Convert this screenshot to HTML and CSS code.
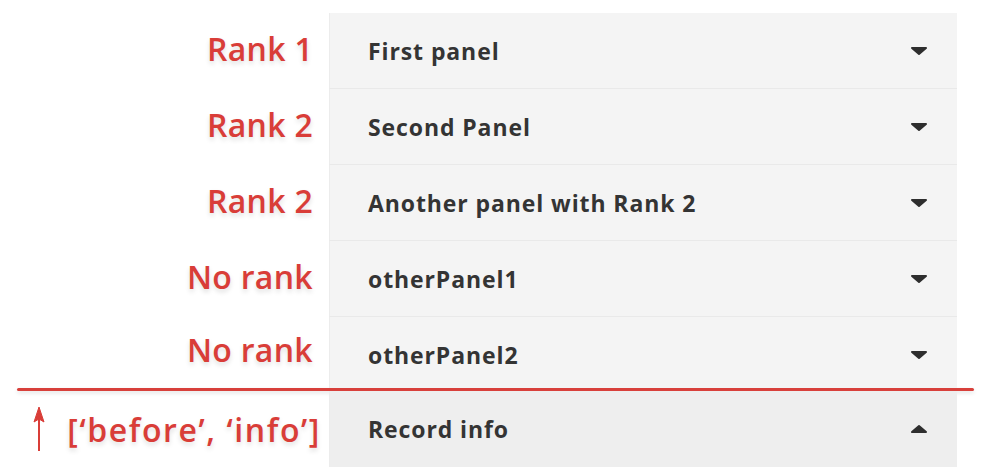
FILE: index.html
```html
<!DOCTYPE html>
<html lang="en">
<head>
<meta charset="UTF-8">
<title>Panel ranks</title>
<link rel="stylesheet" href="styles.css">
</head>
<body>
    <div class="board">
        <div class="row">
            <div class="label">Rank 1</div>
            <div class="panel">
                <span>First panel</span>
                <svg class="caret" width="18" height="10" viewBox="0 0 18 10"><path d="M2 2h14l-7 6z"/></svg>
            </div>
        </div>
        <div class="row">
            <div class="label">Rank 2</div>
            <div class="panel">
                <span>Second Panel</span>
                <svg class="caret" width="18" height="10" viewBox="0 0 18 10"><path d="M2 2h14l-7 6z"/></svg>
            </div>
        </div>
        <div class="row">
            <div class="label">Rank 2</div>
            <div class="panel">
                <span>Another panel with Rank 2</span>
                <svg class="caret" width="18" height="10" viewBox="0 0 18 10"><path d="M2 2h14l-7 6z"/></svg>
            </div>
        </div>
        <div class="row">
            <div class="label">No rank</div>
            <div class="panel">
                <span>otherPanel1</span>
                <svg class="caret" width="18" height="10" viewBox="0 0 18 10"><path d="M2 2h14l-7 6z"/></svg>
            </div>
        </div>
        <div class="row row-short">
            <div class="label">No rank</div>
            <div class="panel">
                <span>otherPanel2</span>
                <svg class="caret" width="18" height="10" viewBox="0 0 18 10"><path d="M2 2h14l-7 6z"/></svg>
            </div>
        </div>

        <div class="divider"></div>

        <div class="row">
            <div class="label label-before">
                <svg class="arrow" width="12" height="46" viewBox="0 0 12 46"><path d="M6 45V12" /><path class="head" d="M1 16L6 1l5 15-5-3z"/></svg>
                <span>[‘before’, ‘info’]</span>
            </div>
            <div class="panel panel-open">
                <span>Record info</span>
                <svg class="caret" width="18" height="10" viewBox="0 0 18 10"><path d="M2 8h14l-7-6z"/></svg>
            </div>
        </div>
    </div>
</body>
</html>
```

FILE: styles.css
```css
body {
    margin: 0;
    background: #ffffff;
    font-family: "Open Sans", "Liberation Sans", sans-serif;
}

.board {
    width: 1000px;
    padding-top: 13px;
}

.row {
    display: grid;
    grid-template-columns: 329px 628px;
    height: 76px;
}

.row-short {
    height: 71px;
}

.label {
    align-self: center;
    text-align: right;
    padding-right: 16px;
    margin-top: -6px;
    color: #d93d38;
    font-size: 32px;
    font-weight: 600;
    letter-spacing: 0.3px;
    text-shadow: 0 3px 5px rgba(0, 0, 0, 0.13);
}

.label-before {
    display: flex;
    justify-content: space-between;
    align-items: center;
    padding-left: 33px;
    padding-right: 8px;
    margin-top: 0;
    letter-spacing: 1.6px;
}

.arrow path {
    stroke: #d93d38;
    stroke-width: 2;
    fill: none;
}

.arrow .head {
    fill: #d93d38;
    stroke-width: 1;
    stroke-linejoin: round;
}

.panel {
    display: flex;
    align-items: center;
    justify-content: space-between;
    padding: 0 29px 0 38px;
    background: #f4f4f4;
    border-left: 1px solid #ececec;
    border-bottom: 1px solid #e9e9e9;
    color: #343434;
    font-size: 23px;
    font-weight: 700;
    letter-spacing: 0.9px;
}

.row-short .panel {
    border-bottom: none;
    padding-top: 4px;
}

.panel-open {
    background: #eeeeee;
    border-bottom: none;
}

.caret path {
    fill: #2e2e2e;
    stroke: #2e2e2e;
    stroke-width: 2;
    stroke-linejoin: round;
}

.divider {
    width: 957px;
    height: 3px;
    margin-left: 17px;
    background: #d8403b;
    border-radius: 2px;
    box-shadow: 0 2px 4px rgba(0, 0, 0, 0.12);
}
```
